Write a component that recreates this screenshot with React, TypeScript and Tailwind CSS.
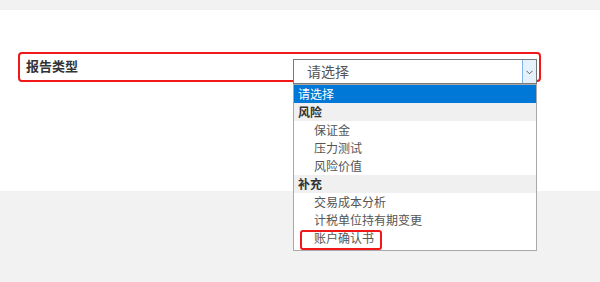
import React from 'react';

const groups = [
  { label: '风险', items: ['保证金', '压力测试', '风险价值'] },
  { label: '补充', items: ['交易成本分析', '计税单位持有期变更', '账户确认书'] },
];

const font = { fontFamily: '"Noto Sans CJK SC", "Liberation Sans", sans-serif' };

export default function App() {
  return (
    <div className="w-full h-[282px] bg-[#f2f2f2] pt-[10px]" style={font}>
      <div className="h-[181px] bg-white pt-[42px]">
        <div className="relative ml-[18px] w-[523px] h-[30px] border-2 border-[#f01818] rounded-[4px] flex items-start">
          <span className="pl-[6px] pt-[3px] w-[273px] text-[13px] leading-[18px] font-bold text-[#333]">报告类型</span>

          <div className="relative mt-[5px]">
            <div className="w-[244px] h-[25px] border border-[#7a7a7a] bg-white flex items-stretch">
              <span className="flex-1 pl-[13px] text-[14px] leading-[23px] text-[#555]">请选择</span>
              <span className="w-[14px] bg-[#e5f1fb] border-l border-[#7eb4ea] flex items-center justify-center">
                <svg width="7" height="5" viewBox="0 0 7 5" className="mt-[2px]">
                  <path d="M0.5 0.8 L3.5 3.8 L6.5 0.8" fill="none" stroke="#606060" strokeWidth="1" />
                </svg>
              </span>
            </div>

            {/* open listbox */}
            <div className="absolute left-0 top-[25px] z-10 w-[244px] bg-white border border-[#a9a9a9] pb-[3px]">
              <div className="h-[18px] pl-[4px] bg-[#0078d7] text-white text-[12px] leading-[18px]">请选择</div>
              {groups.map(g => (
                <div key={g.label}>
                  <div className="h-[18px] pl-[4px] bg-[#f0f0f0] text-[12px] leading-[18px] font-bold text-[#333]">{g.label}</div>
                  {g.items.map(it => (
                    <div key={it} className="relative h-[18px] pl-[20px] text-[12px] leading-[18px] text-[#555]">
                      {it}
                      {it === '账户确认书' && (
                        <span className="absolute left-[6px] top-[1px] w-[82px] h-[20px] border-2 border-[#f01818] rounded-[3px]" />
                      )}
                    </div>
                  ))}
                </div>
              ))}
            </div>
          </div>
        </div>
      </div>
    </div>
  );
}
